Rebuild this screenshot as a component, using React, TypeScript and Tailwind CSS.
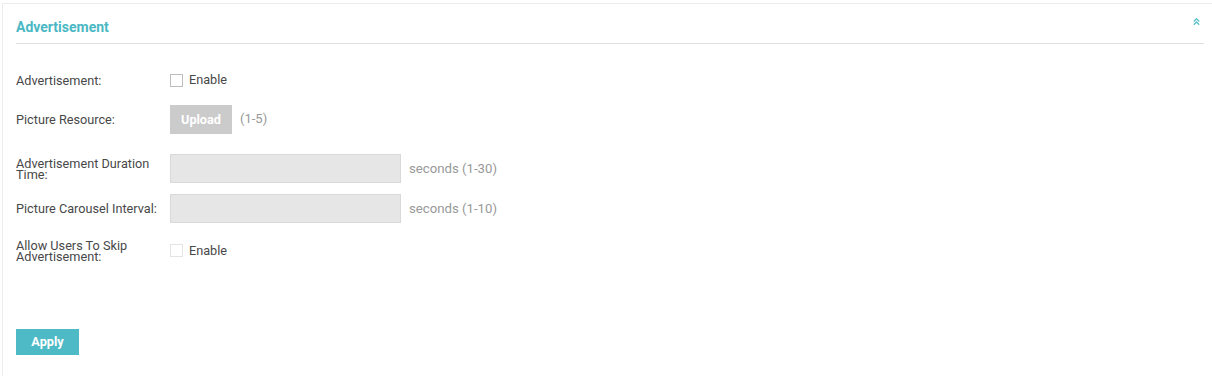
import React from "react";

function ChevronsUp() {
  return (
    <svg width="9" height="9" viewBox="0 0 10 10" fill="none" stroke="#5cc0cb" strokeWidth="1.5">
      <path d="M2 5 L5 2 L8 5" />
      <path d="M2 8.5 L5 5.5 L8 8.5" />
    </svg>
  );
}

function Row({ label, children, className = "" }: { label: React.ReactNode; children: React.ReactNode; className?: string }) {
  return (
    <div className={`flex items-center ${className}`}>
      <div className="w-[154px] text-[12.7px] leading-[11px] text-[#484848]">{label}</div>
      <div className="flex items-center">{children}</div>
    </div>
  );
}

export default function App() {
  return (
    <div className="w-[1212px] h-[376px] bg-white pt-[3px] pl-[2px]" style={{ fontFamily: "Roboto, 'Liberation Sans', Arial, sans-serif" }}>
      <div className="h-[373px] border-l border-t border-[#ececec] pl-[13px] pr-[8px]">
        <div className="flex items-center justify-between h-[40px] border-b border-[#e0e0e0]">
          <div className="text-[14px] font-bold text-[#4ab8c4] pt-[7px]">Advertisement</div>
          <div className="pr-[3px] mb-[4px]"><ChevronsUp /></div>
        </div>
        <div className="pt-[28px] flex flex-col">
          <Row label="Advertisement:" className="h-[16px]">
            <span className="w-[13px] h-[13px] border border-[#bdbdbd] bg-white mr-[6px]" />
            <span className="text-[12.7px] text-[#484848]">Enable</span>
          </Row>
          <Row label="Picture Resource:" className="h-[29px] mt-[17px]">
            <span className="w-[62px] h-[29px] bg-[#cbcbcb] text-white text-[12.7px] font-bold flex items-center justify-center">Upload</span>
            <span className="ml-[8px] text-[13px] text-[#999] mb-[2px]">(1-5)</span>
          </Row>
          <Row label={<>Advertisement Duration<br />Time:</>} className="h-[29px] mt-[20px]">
            <span className="w-[231px] h-[29px] bg-[#e6e6e6] border border-[#d9d9d9]" />
            <span className="ml-[8px] text-[13.2px] text-[#999]">seconds (1-30)</span>
          </Row>
          <Row label="Picture Carousel Interval:" className="h-[29px] mt-[11px]">
            <span className="w-[231px] h-[29px] bg-[#e6e6e6] border border-[#d9d9d9]" />
            <span className="ml-[8px] text-[13.2px] text-[#999]">seconds (1-10)</span>
          </Row>
          <Row label={<>Allow Users To Skip<br />Advertisement:</>} className="h-[29px] mt-[13px]">
            <span className="w-[13px] h-[13px] border border-[#e4e4e4] bg-white mr-[6px]" />
            <span className="text-[12.7px] text-[#484848]">Enable</span>
          </Row>
        </div>
        <div className="mt-[64px]">
          <button className="w-[63px] h-[26px] bg-[#4ebac6] text-white text-[12.7px] font-bold">Apply</button>
        </div>
      </div>
    </div>
  );
}
